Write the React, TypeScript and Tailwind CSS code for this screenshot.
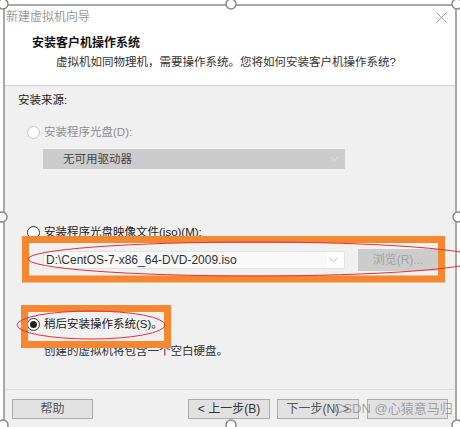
import React from "react";

const FONT = { fontFamily: '"Liberation Sans", "Noto Sans CJK SC", sans-serif' };

const Radio = ({ checked = false, disabled = false }: { checked?: boolean; disabled?: boolean }) => (
  <span
    className={`flex h-[13px] w-[13px] shrink-0 items-center justify-center rounded-full border bg-white ${
      disabled ? "border-[#c4c4c4]" : "border-[#333333]"
    }`}
  >
    {checked && <span className="h-[7px] w-[7px] rounded-full bg-[#222222]" />}
  </span>
);

const Chevron = ({ color = "#b5b5b5" }: { color?: string }) => (
  <svg width="9" height="6" viewBox="0 0 9 6" className="shrink-0">
    <path d="M0.5 0.8 L4.5 4.8 L8.5 0.8" fill="none" stroke={color} strokeWidth="1" />
  </svg>
);

const Button = ({ label, className = "" }: { label: string; className?: string }) => (
  <div
    className={`flex h-[20px] items-center justify-center border border-[#adadad] bg-[#e1e1e1] text-[12px] ${className}`}
  >
    {label}
  </div>
);

const Annotations = () => (
  <svg
    width="460"
    height="427"
    viewBox="0 0 460 427"
    className="pointer-events-none absolute left-0 top-0"
  >
    <rect x="25.5" y="239.5" width="416" height="39.5" fill="none" stroke="#f4872f" strokeWidth="7" />
    <rect x="24.5" y="308.5" width="143" height="36" fill="none" stroke="#f4872f" strokeWidth="7" />
    <ellipse cx="254" cy="259" rx="226" ry="17" fill="none" stroke="#e2313b" strokeWidth="1" />
    <ellipse cx="91" cy="325" rx="74" ry="14" fill="none" stroke="#e2313b" strokeWidth="1" />
    {[
      [3, 4],
      [231, 4],
      [457, 4],
      [2, 217],
      [458, 217],
      [3, 425],
      [231, 425],
      [457, 425],
    ].map(([cx, cy]) => (
      <circle key={`${cx}-${cy}`} cx={cx} cy={cy} r="5" fill="#ffffff" stroke="#8a8a8a" strokeWidth="1.5" />
    ))}
  </svg>
);

export default function App() {
  return (
    <div className="relative h-[427px] w-[460px] overflow-hidden bg-white px-[3px] pt-[4px]" style={FONT}>
      <div className="flex h-[423px] flex-col border-x-2 border-t-2 border-[#a8a8a8]">
        {/* title + header */}
        <div className="flex h-[79px] flex-col bg-white">
          <div className="flex h-[22px] items-center justify-between pl-[1px] pr-[8px]">
            <span className="text-[12px] text-[#9a9a9a]">新建虚拟机向导</span>
            <svg width="11" height="11" viewBox="0 0 11 11">
              <path d="M0.5 0.5 L10.5 10.5 M10.5 0.5 L0.5 10.5" stroke="#a0a0a0" strokeWidth="1" />
            </svg>
          </div>
          <div className="mt-[7px] pl-[27px] text-[12px] font-bold leading-[16px] text-[#111111]">
            安装客户机操作系统
          </div>
          <div className="mt-[3px] pl-[51px] text-[11.5px] leading-[16px] text-[#333333]">
            虚拟机如同物理机，需要操作系统。您将如何安装客户机操作系统?
          </div>
        </div>
        <div className="h-px bg-[#d2d2d2]" />

        {/* body */}
        <div className="flex h-[303px] flex-col bg-[#f0f0f0] text-[11.5px] leading-[16px]">
          <div className="ml-[13px] mt-[6px] text-[#222222]">安装来源:</div>

          <div className="ml-[22px] mt-[16px] flex items-center gap-[4px]">
            <Radio disabled />
            <span className="text-[#8e8e8e]">安装程序光盘(D):</span>
          </div>
          <div className="ml-[38px] mt-[9px] flex h-[20px] w-[302px] items-center justify-between bg-[#cccccc] pl-[20px] pr-[6px]">
            <span className="text-[#444444]">无可用驱动器</span>
            <Chevron color="#e0e0e0" />
          </div>

          <div className="ml-[22px] mt-[55px] flex items-center gap-[4px]">
            <Radio />
            <span className="text-[#222222]">安装程序光盘映像文件(iso)(M):</span>
          </div>
          <div className="ml-[38px] mt-[9px] flex items-center gap-[13px]">
            <div className="flex h-[18px] w-[302px] items-center justify-between border border-[#e2e2e2] bg-white pr-[6px]">
              <span className="flex h-full w-[283px] items-center bg-[#f8f8f8] pl-[2px] text-[12px] text-[#333333]">
                D:\CentOS-7-x86_64-DVD-2009.iso
              </span>
              <Chevron />
            </div>
            <div className="flex h-[22px] w-[80px] items-center justify-center bg-[#cccccc] text-[12px] text-[#a3a3a3]">
              浏览(R)...
            </div>
          </div>

          <div className="ml-[22px] mt-[45px] flex items-center gap-[4px]">
            <Radio checked />
            <span className="text-[#222222]">稍后安装操作系统(S)。</span>
          </div>
          <div className="ml-[39px] mt-[11px] text-[#333333]">创建的虚拟机将包含一个空白硬盘。</div>
        </div>
        <div className="h-px bg-[#dadada]" />

        {/* footer */}
        <div className="relative flex flex-1 items-start bg-[#f0f0f0] pt-[9px]">
          <Button label="帮助" className="ml-[7px] w-[81px] text-[#555555]" />
          <Button label="< 上一步(B)" className="ml-[95px] w-[82px] text-[#333333]" />
          <Button label="下一步(N) >" className="ml-[7px] w-[82px] text-[#555555]" />
          <Button label="" className="ml-[8px] w-[81px]" />
          <span className="absolute left-[329px] top-[11px] text-[13px] leading-[16px] text-[#8a8a8a]/75">
            CSDN @心猿意马归
          </span>
        </div>
      </div>
      <Annotations />
    </div>
  );
}
